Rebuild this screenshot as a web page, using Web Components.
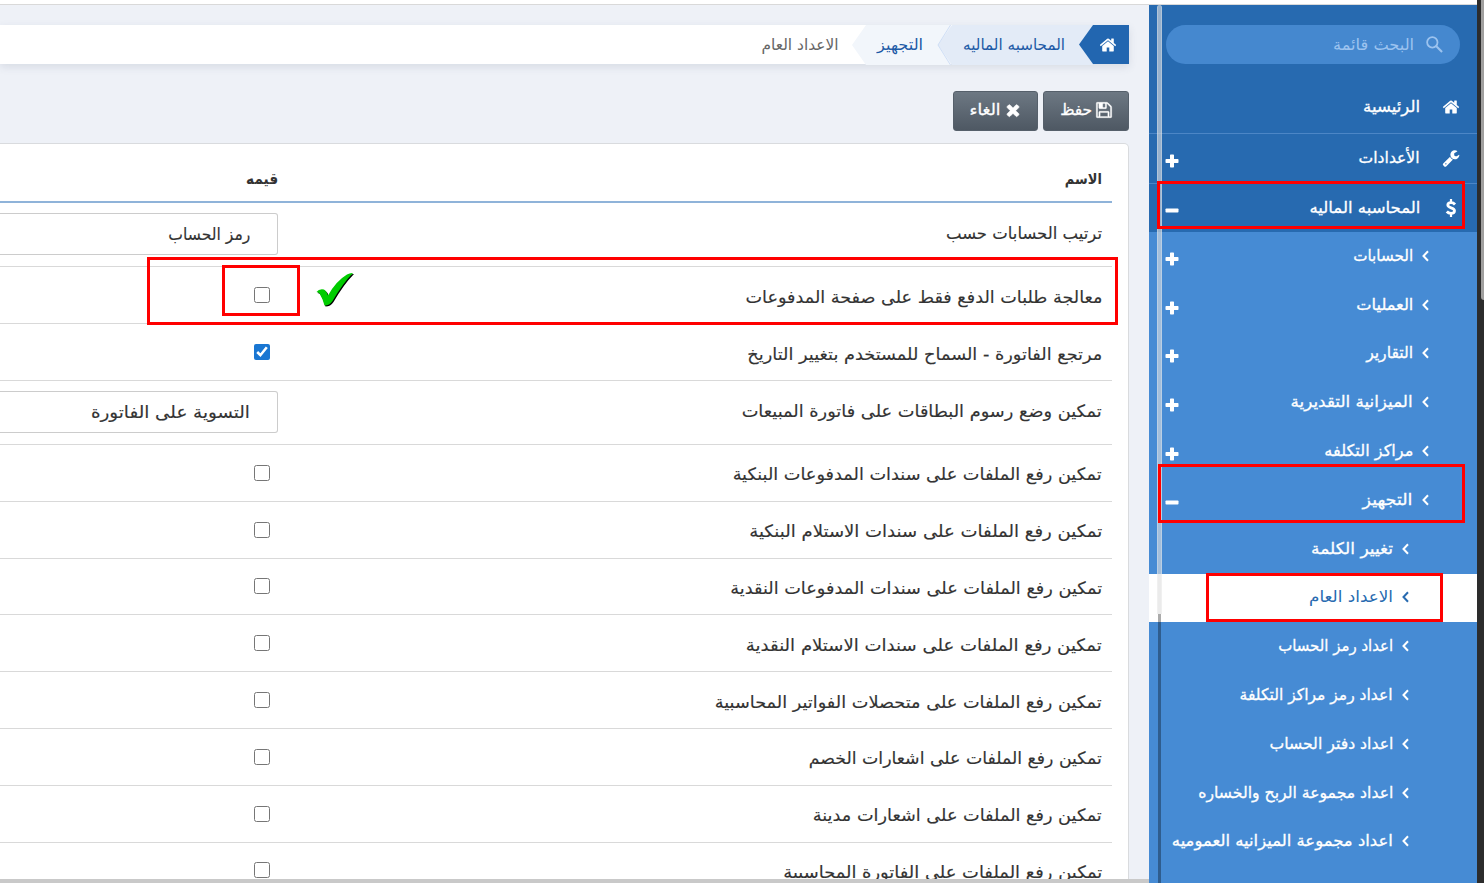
<!DOCTYPE html>
<html lang="ar" dir="rtl">
<head>
<meta charset="utf-8">
<title>الاعداد العام</title>
<style>
  html, body { margin: 0; height: 100%; overflow: hidden; }
  body { font-family: "DejaVu Sans", "Noto Sans", sans-serif; color: #333; background: #fff; }
</style>
</head>
<body>
<app-shell>
  <side-bar slot="side">
    <menu-search slot="search"></menu-search>
    <nav-item level="1" icon="home" label="الرئيسية" w="57" style="height:52px"></nav-item>
    <nav-item level="1" icon="wrench" label="الأعدادات" w="61" toggle="plus" style="height:50px"></nav-item>
    <nav-item level="1" icon="dollar" label="المحاسبه الماليه" w="111" toggle="minus" last style="height:48px"></nav-item>
    <nav-item level="2" icon="angle" label="الحسابات" w="60" toggle="plus"></nav-item>
    <nav-item level="2" icon="angle" label="العمليات" w="57" toggle="plus"></nav-item>
    <nav-item level="2" icon="angle" label="التقارير" w="47" toggle="plus"></nav-item>
    <nav-item level="2" icon="angle" label="الميزانية التقديرية" w="122" toggle="plus"></nav-item>
    <nav-item level="2" icon="angle" label="مراكز التكلفه" w="89" toggle="plus"></nav-item>
    <nav-item level="2" icon="angle" label="التجهيز" w="50" toggle="minus"></nav-item>
    <nav-item level="3" icon="angle" label="تغيير الكلمة" w="82"></nav-item>
    <nav-item level="3" icon="angle" label="الاعداد العام" w="84" active></nav-item>
    <nav-item level="3" icon="angle" label="اعداد رمز الحساب" w="115"></nav-item>
    <nav-item level="3" icon="angle" label="اعداد رمز مراكز التكلفة" w="153"></nav-item>
    <nav-item level="3" icon="angle" label="اعداد دفتر الحساب" w="124"></nav-item>
    <nav-item level="3" icon="angle" label="اعداد مجموعة الربح والخساره" w="195"></nav-item>
    <nav-item level="3" icon="angle" label="اعداد مجموعة الميزانيه العموميه" w="221"></nav-item>
  </side-bar>

  <bread-crumb slot="main"></bread-crumb>
  <tool-bar slot="main">
    <tool-button icon="floppy" label="حفظ" w="32" style="width:86px"></tool-button>
    <tool-button icon="times" label="الغاء" w="31" style="width:85px"></tool-button>
  </tool-bar>
  <settings-card slot="main">
    <setting-row label="ترتيب الحسابات حسب" w="156" value="رمز الحساب" vw="82"></setting-row>
    <setting-row label="معالجة طلبات الدفع فقط على صفحة المدفوعات" w="357" style="height:57px"></setting-row>
    <setting-row label="مرتجع الفاتورة - السماح للمستخدم بتغيير التاريخ" w="355" checked style="height:57px"></setting-row>
    <setting-row label="تمكين وضع رسوم البطاقات على فاتورة المبيعات" w="360" value="التسوية على الفاتورة" vw="159"></setting-row>
    <setting-row label="تمكين رفع الملفات على سندات المدفوعات البنكية" w="369"></setting-row>
    <setting-row label="تمكين رفع الملفات على سندات الاستلام البنكية" w="353"></setting-row>
    <setting-row label="تمكين رفع الملفات على سندات المدفوعات النقدية" w="372"></setting-row>
    <setting-row label="تمكين رفع الملفات على سندات الاستلام النقدية" w="356"></setting-row>
    <setting-row label="تمكين رفع الملفات على متحصلات الفواتير المحاسبية" w="387"></setting-row>
    <setting-row label="تمكين رفع الملفات على اشعارات الخصم" w="293"></setting-row>
    <setting-row label="تمكين رفع الملفات على اشعارات مدينة" w="289"></setting-row>
    <setting-row label="تمكين رفع الملفات على الفاتورة المحاسبية" w="319"></setting-row>
  </settings-card>
</app-shell>

<mark-box style="left:1157px;top:181px;width:308px;height:48px"></mark-box>
<mark-box style="left:1158px;top:464px;width:307px;height:59px"></mark-box>
<mark-box style="left:1206px;top:573px;width:237px;height:49px"></mark-box>
<mark-box style="left:147px;top:257px;width:971px;height:68px"></mark-box>
<mark-box style="left:222px;top:265px;width:78px;height:51px"></mark-box>
<mark-tick style="left:316px;top:272px"></mark-tick>

<script>
const ICONS = {
  home: ['0 0 1792 1792', '<path d="M1472 992v480q0 26-19 45t-45 19h-384v-384h-256v384h-384q-26 0-45-19t-19-45v-480q0-1 .5-3t.5-3l575-474 575 474q1 2 1 6zm223-69l-62 74q-8 9-21 11h-3q-13 0-21-7l-692-577-692 577q-12 8-24 7-13-2-21-11l-62-74q-8-10-7-23.5t11-21.5l719-599q32-26 76-26t76 26l244 204v-195q0-14 9-23t23-9h192q14 0 23 9t9 23v408l219 182q10 8 11 21.5t-7 23.5z"/>'],
  wrench: ['0 0 1792 1792', '<path d="M448 1472q0-26-19-45t-45-19-45 19-19 45 19 45 45 19 45-19 19-45zm644-420l-682 682q-37 37-90 37-52 0-91-37l-106-108q-38-36-38-90 0-53 38-91l681-681q39 98 114.5 173.5t173.5 114.5zm634-435q0 39-23 106-47 134-164.5 217.5t-258.5 83.5q-185 0-316.5-131.5t-131.5-316.5 131.5-316.5 316.5-131.5q58 0 121.5 16.5t107.5 46.5q16 11 16 28t-16 28l-293 169v224l193 107q5-3 79-48.5t135.5-81 70.5-35.5q15 0 23.5 10t8.5 25z"/>'],
  dollar: ['0 0 18 18', '<path d="M9 0v3.4M9 14.6V18" fill="none" stroke="currentColor" stroke-width="2.200"/><path d="M13 5.500C12 4.300 10.500 3.700 9 3.700c-1.900 0-3.200 1-3.200 2.400C5.800 9.400 12.500 8.300 12.500 11.800c0 1.600-1.500 2.600-3.500 2.600-1.700 0-3.200-.7-4.200-1.900" fill="none" stroke="currentColor" stroke-width="2.800"/>'],
  angle: ['0 0 7 12', '<path d="M6 1.300L1.500 6 6 10.700" fill="none" stroke="currentColor" stroke-width="2"/>'],
  plus: ['0 0 14 14', '<path d="M5 1.200q0-.7.700-.7h2.600q.7 0 .7.700V5h3.800q.7 0 .7.700v2.600q0 .7-.7.700H9v3.800q0 .7-.7.700H5.700q-.7 0-.7-.7V9H1.200q-.7 0-.7-.7V5.700q0-.7.700-.7H5z"/>'],
  minus: ['0 0 14 14', '<rect x=".5" y="4.500" width="13" height="4" rx=".8"/>'],
  times: ['0 0 1792 1792', '<path d="M1490 1322q0 40-28 68l-136 136q-28 28-68 28t-68-28l-294-294-294 294q-28 28-68 28t-68-28l-136-136q-28-28-28-68t28-68l294-294-294-294q-28-28-28-68t28-68l136-136q28-28 68-28t68 28l294 294 294-294q28-28 68-28t68 28l136 136q28 28 28 68t-28 68l-294 294 294 294q28 28 28 68z" stroke="currentColor" stroke-width="60"/>'],
  floppy: ['0 0 1792 1792', '<path d="M512 1536h768v-384h-768v384zm896 0h128v-896q0-14-10-38.5t-20-34.5l-281-281q-10-10-34-20t-39-10v416q0 40-28 68t-68 28h-576q-40 0-68-28t-28-68v-416h-128v1280h128v-416q0-40 28-68t68-28h832q40 0 68 28t28 68v416zm-384-928v-320q0-13-9.5-22.5t-22.5-9.5h-192q-13 0-22.5 9.5t-9.5 22.5v320q0 13 9.5 22.5t22.5 9.5h192q13 0 22.5-9.5t9.5-22.5zm640 32v928q0 40-28 68t-68 28h-1344q-40 0-68-28t-28-68v-1344q0-40 28-68t68-28h928q40 0 88 20t76 48l280 280q28 28 48 76t20 88z" stroke="currentColor" stroke-width="36"/>'],
  search: ['0 0 18 18', '<circle cx="6.700" cy="6.700" r="5.500" fill="none" stroke="currentColor" stroke-width="1.900"/><path d="M10.700 10.700l6.300 6.300" fill="none" stroke="currentColor" stroke-width="2.200"/>']
};

function icon(name, width, height = width) {
  const [box, body] = ICONS[name];
  return `<svg class="icon" viewBox="${box}" width="${width}" height="${height}" fill="currentColor">${body}</svg>`;
}

// Arabic text squeezed or stretched to a set width, so joined letters stay joined
class FitText extends HTMLElement {
  constructor() {
    super();
    this.attachShadow({ mode: 'open' });
  }

  connectedCallback() {
    const width = Number(this.getAttribute('w'));
    this.shadowRoot.innerHTML = `
      <style>
        :host { display: block; flex: none; width: ${width}px; white-space: nowrap; line-height: 24px; }
        span { display: inline-block; transform-origin: 100% 50%; }
      </style>
      <span>${this.getAttribute('text')}</span>
    `;
    const span = this.shadowRoot.querySelector('span');
    const natural = span.getBoundingClientRect().width;
    if (natural) span.style.transform = `scaleX(${width / natural})`;
  }
}

class AppShell extends HTMLElement {
  constructor() {
    super();
    this.attachShadow({ mode: 'open' });
    this.shadowRoot.innerHTML = `
      <style>
        :host { display: flex; height: 883px; overflow: hidden; }
        .scroll { flex: none; width: 7px; background: #2c2c2c; }
        .scroll i { display: block; width: 3px; height: 300px; margin-right: 0; background: #a09f9e; border-radius: 0 0 0 3px; }
        .page { flex: 1; display: flex; flex-direction: column; min-width: 0; }
        .top { flex: none; height: 4px; background: #fff; border-bottom: 1px solid #d9d9d9; }
        .body { flex: 1; display: flex; min-height: 0; }
        main {
          flex: 1; min-width: 0; display: flex; flex-direction: column;
          box-sizing: border-box; padding: 20px 20px 0 0; overflow: hidden;
          background: #eef1f7; border-bottom: 4px solid #c9c9c9;
        }
      </style>
      <div class="scroll"><i></i></div>
      <div class="page">
        <div class="top"></div>
        <div class="body">
          <slot name="side"></slot>
          <main><slot name="main"></slot></main>
        </div>
      </div>
    `;
  }
}

class SideBar extends HTMLElement {
  constructor() {
    super();
    this.attachShadow({ mode: 'open' });
    this.shadowRoot.innerHTML = `
      <style>
        :host {
          display: block; position: relative; flex: none; width: 328px; overflow: hidden;
          background: #468bd4; color: #fff;
        }
        .track { position: absolute; left: 9px; top: 609px; bottom: 0; width: 3px; background: rgba(0, 0, 0, .33); }
        .thumb {
          position: absolute; left: 8px; top: 0; width: 5px; height: 609px; box-sizing: border-box;
          background: rgba(222, 222, 222, .62); border-left: 1px solid rgba(255, 255, 255, .25);
          border-right: 1px solid rgba(255, 255, 255, .25); border-radius: 3px 3px 0 0;
        }
      </style>
      <slot name="search"></slot>
      <slot></slot>
      <div class="track"></div>
      <div class="thumb"></div>
    `;
  }
}

class MenuSearch extends HTMLElement {
  constructor() {
    super();
    this.attachShadow({ mode: 'open' });
    this.shadowRoot.innerHTML = `
      <style>
        :host { display: block; height: 77px; padding: 20px 17px 0; box-sizing: border-box; background: #276ab0; }
        div {
          display: flex; align-items: center; gap: 12px; height: 39px; padding: 0 17px;
          border-radius: 20px; background: #4588cf; color: #9cc3ef; font-size: 16px;
        }
      </style>
      <div>${icon('search', 17)}<fit-text w="81" text="البحث قائمة"></fit-text></div>
    `;
  }
}

class NavItem extends HTMLElement {
  constructor() {
    super();
    this.attachShadow({ mode: 'open' });
  }

  connectedCallback() {
    const level = this.getAttribute('level');
    const toggle = this.getAttribute('toggle');
    const name = this.getAttribute('icon');
    this.shadowRoot.innerHTML = `
      <style>
        :host {
          display: flex; align-items: center; box-sizing: border-box; height: 48.8px;
          padding: 0 48px 1px 16px; gap: 9px; font-size: 16px;
          -webkit-text-stroke: .3px currentColor;
        }
        :host([level="1"]) {
          padding-right: 17px; gap: 22px; background: #276ab0; border-bottom: 1px solid #4c86c6;
        }
        :host([level="3"]) { padding-right: 68px; }
        :host([last]) { border-bottom: 0; }
        :host([active]) { background: #fff; color: #276ab0; -webkit-text-stroke: 0; }
        .toggle { display: flex; margin-right: auto; padding-top: 6px; }
        .icon { flex: none; }
      </style>
      ${level === '1' ? icon(name, 18) : icon(name, 7, 12)}
      <fit-text w="${this.getAttribute('w')}" text="${this.getAttribute('label')}"></fit-text>
      ${toggle ? `<span class="toggle">${icon(toggle, 14)}</span>` : ''}
    `;
  }
}

class BreadCrumb extends HTMLElement {
  constructor() {
    super();
    this.attachShadow({ mode: 'open' });
    this.shadowRoot.innerHTML = `
      <style>
        :host {
          display: flex; flex: none; height: 39px; background: #fff; font-size: 15.5px; color: #666;
          box-shadow: 0 3px 8px rgba(60, 80, 110, .13);
        }
        div { display: flex; align-items: center; box-sizing: border-box; flex: none; }
        .arrow { clip-path: polygon(0 50%, 14px 0, 100% 0, 100% 100%, 14px 100%); }
        .home { width: 50px; padding-right: 12px; background: #2266b0; color: #fff; z-index: 3; }
        .second { width: 155px; height: 40px; margin-right: -14px; padding-right: 28px; background: #e3ebf7; color: #1d5aa6; z-index: 2; }
        .third { width: 99px; height: 40px; margin-right: -14px; padding-right: 28px; background: #f2f6fb; color: #1d5aa6; z-index: 1; }
        .last { padding-right: 14px; }
        .edge { width: 14px; height: 40px; margin-right: -13px; z-index: 3; }
      </style>
      <div class="arrow home">${icon('home', 18)}</div>
      <div class="arrow second"><fit-text w="102" text="المحاسبه الماليه"></fit-text></div>
      <svg class="edge" viewBox="0 0 14 40"><path d="M13.500 0L1 20l12.500 20" fill="none" stroke="#cfdef5"/></svg>
      <div class="arrow third"><fit-text w="46" text="التجهيز"></fit-text></div>
      <div class="last"><fit-text w="77" text="الاعداد العام"></fit-text></div>
    `;
    this.shadowRoot.querySelector('.home').style.width = '50px';
  }
}

class ToolBar extends HTMLElement {
  constructor() {
    super();
    this.attachShadow({ mode: 'open' });
    this.shadowRoot.innerHTML = `
      <style>
        :host { display: flex; flex: none; gap: 5px; margin: 27px 0 12px; }
      </style>
      <slot></slot>
    `;
  }
}

class ToolButton extends HTMLElement {
  constructor() {
    super();
    this.attachShadow({ mode: 'open' });
  }

  connectedCallback() {
    this.shadowRoot.innerHTML = `
      <style>
        :host {
          display: flex; align-items: center; gap: 3px; box-sizing: border-box; height: 40px; padding: 0 15px 2px 0;
          border: 1px solid #56606b; border-radius: 3px; color: #fff; font-size: 15.5px;
          background: linear-gradient(#6d7883, #4e5863);
          -webkit-text-stroke: .3px currentColor;
        }
      </style>
      ${icon(this.getAttribute('icon'), 18)}
      <fit-text w="${this.getAttribute('w')}" text="${this.getAttribute('label')}"></fit-text>
    `;
  }
}

class SettingsCard extends HTMLElement {
  constructor() {
    super();
    this.attachShadow({ mode: 'open' });
    this.shadowRoot.innerHTML = `
      <style>
        :host {
          display: block; flex: none; height: 780px; box-sizing: border-box; padding-right: 16px;
          background: #fff; border: 1px solid #d9dbde; border-left: 0; border-radius: 0 5px 0 0;
        }
        header {
          display: grid; grid-template-columns: 824px 1fr; align-items: center; box-sizing: border-box;
          height: 59px; padding: 12px 10px 0 0; border-bottom: 2px solid #8fb3d9;
          font-size: 15px; font-weight: bold;
        }
      </style>
      <header><fit-text w="37" text="الاسم"></fit-text><fit-text w="32" text="قيمه"></fit-text></header>
      <slot></slot>
    `;
  }
}

class SettingRow extends HTMLElement {
  constructor() {
    super();
    this.attachShadow({ mode: 'open' });
  }

  connectedCallback() {
    const value = this.getAttribute('value');
    const checked = this.hasAttribute('checked') ? 'checked' : '';
    this.shadowRoot.innerHTML = `
      <style>
        :host {
          display: grid; grid-template-columns: 824px 1fr; align-items: center; box-sizing: border-box;
          height: 56.8px; padding-right: 10px; border-bottom: 1px solid #d9d9d9; font-size: 17px;
          -webkit-text-stroke: .15px currentColor;
        }
        :host([value]) { height: 64px; }
        .label { padding-top: 3px; }
        :host([value]) .label { padding: 0 0 4px; }
        .field {
          display: flex; align-items: center; box-sizing: border-box; height: 42px; padding-right: 27px;
          margin-bottom: 1px; border: 1px solid #ccc; border-left: 0; border-radius: 0 3px 3px 0;
        }
        input { width: 16px; height: 16px; margin: 0 8px 0 0; accent-color: #1976d2; }
      </style>
      <fit-text class="label" w="${this.getAttribute('w')}" text="${this.getAttribute('label')}"></fit-text>
      ${value
        ? `<div class="field"><fit-text w="${this.getAttribute('vw')}" text="${value}"></fit-text></div>`
        : `<input type="checkbox" ${checked}>`}
    `;
  }
}

// Red frame laid over the page
class MarkBox extends HTMLElement {
  constructor() {
    super();
    this.attachShadow({ mode: 'open' });
    this.shadowRoot.innerHTML = `
      <style>
        :host { display: block; position: absolute; box-sizing: border-box; border: 3px solid #f00; pointer-events: none; }
      </style>
    `;
  }
}

class MarkTick extends HTMLElement {
  constructor() {
    super();
    this.attachShadow({ mode: 'open' });
    this.shadowRoot.innerHTML = `
      <style>
        :host { display: block; position: absolute; width: 39px; height: 36px; }
        svg { display: block; }
      </style>
      <svg width="39" height="36" viewBox="0 0 39 36">
        <path transform="translate(1 1)" fill="#000" d="M.5 20Q3 16.500 8 17.500Q10.500 19 12 23.500Q20 9 31 2.500Q34.500 .5 37 1Q27 11 16.500 29Q13.500 33.500 8.500 33.500Q7 27 3.500 21.500Q2.500 20 .5 20z"/>
        <path fill="#0c0" d="M.5 20Q3 16.500 8 17.500Q10.500 19 12 23.500Q20 9 31 2.500Q34.500 .5 37 1Q27 11 16.500 29Q13.500 33.500 8.500 33.500Q7 27 3.500 21.500Q2.500 20 .5 20z"/>
      </svg>
    `;
  }
}

customElements.define('fit-text', FitText);
customElements.define('app-shell', AppShell);
customElements.define('side-bar', SideBar);
customElements.define('menu-search', MenuSearch);
customElements.define('nav-item', NavItem);
customElements.define('bread-crumb', BreadCrumb);
customElements.define('tool-bar', ToolBar);
customElements.define('tool-button', ToolButton);
customElements.define('settings-card', SettingsCard);
customElements.define('setting-row', SettingRow);
customElements.define('mark-box', MarkBox);
customElements.define('mark-tick', MarkTick);
</script>
</body>
</html>
